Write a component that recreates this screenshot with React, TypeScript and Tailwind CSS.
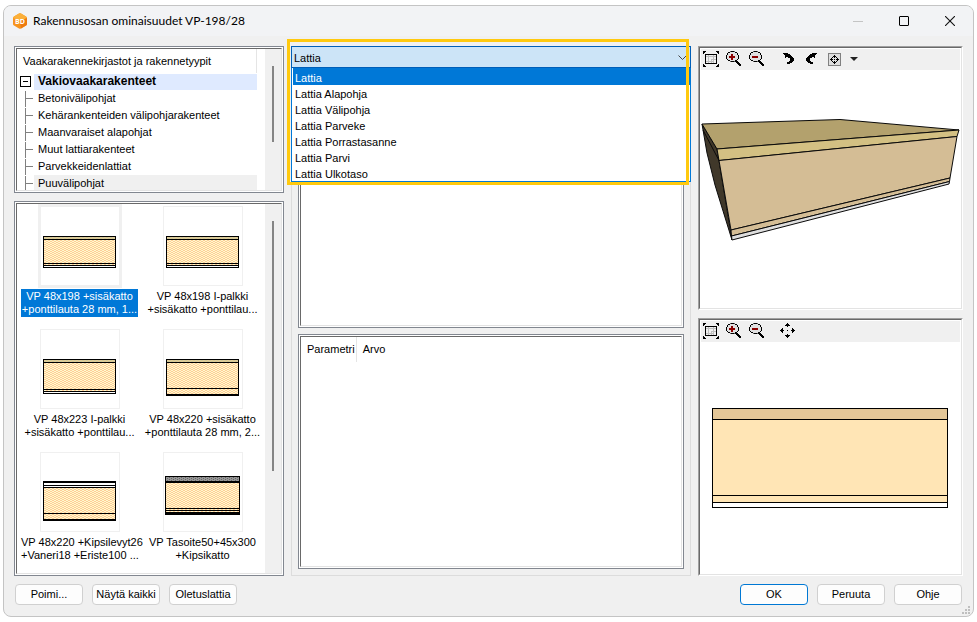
import type { ReactNode } from "react";

const treeItems = [
  "Betonivälipohjat",
  "Kehärankenteiden välipohjarakenteet",
  "Maanvaraiset alapohjat",
  "Muut lattiarakenteet",
  "Parvekkeidenlattiat",
  "Puuvälipohjat",
];

const floorTypes = [
  "Lattia",
  "Lattia Alapohja",
  "Lattia Välipohja",
  "Lattia Parveke",
  "Lattia Porrastasanne",
  "Lattia Parvi",
  "Lattia Ulkotaso",
];

type Layer = { y: number; h: number; fill: string };

type Structure = {
  label: [string, string];
  x: number;
  w: number;
  layers: Layer[];
};

const BLACK = "#000000";
const WOOD = "url(#wood)";
const BOARD = "url(#board)";
const CONCRETE = "url(#concrete)";

// layers are painted over a black block, so the gaps become the outlines
const structures: Structure[] = [
  {
    label: ["VP 48x198 +sisäkatto", "+ponttilauta 28 mm, 1..."],
    x: 3,
    w: 73,
    layers: [
      { y: 30, h: 32, fill: BLACK },
      { y: 31, h: 2, fill: BOARD },
      { y: 34, h: 23, fill: WOOD },
      { y: 58, h: 1, fill: WOOD },
      { y: 60, h: 1, fill: "#fff" },
    ],
  },
  {
    label: ["VP 48x198 I-palkki", "+sisäkatto +ponttilau..."],
    x: 3,
    w: 73,
    layers: [
      { y: 30, h: 32, fill: BLACK },
      { y: 31, h: 2, fill: BOARD },
      { y: 34, h: 23, fill: WOOD },
      { y: 58, h: 1, fill: WOOD },
      { y: 60, h: 1, fill: "#fff" },
    ],
  },
  {
    label: ["VP 48x223 I-palkki", "+sisäkatto +ponttilau..."],
    x: 3,
    w: 73,
    layers: [
      { y: 30, h: 35, fill: BLACK },
      { y: 31, h: 2, fill: BOARD },
      { y: 34, h: 26, fill: WOOD },
      { y: 61, h: 1, fill: WOOD },
      { y: 63, h: 1, fill: "#fff" },
    ],
  },
  {
    label: ["VP 48x220 +sisäkatto", "+ponttilauta 28 mm, 2..."],
    x: 3,
    w: 73,
    layers: [
      { y: 30, h: 37, fill: BLACK },
      { y: 31, h: 2, fill: BOARD },
      { y: 34, h: 25, fill: WOOD },
      { y: 60, h: 5, fill: WOOD },
    ],
  },
  {
    label: ["VP 48x220 +Kipsilevyt26", "+Vaneri18 +Eriste100 ..."],
    x: 3,
    w: 73,
    layers: [
      { y: 29, h: 40, fill: BLACK },
      { y: 31, h: 2, fill: "#fff" },
      { y: 34, h: 1, fill: "#fff" },
      { y: 36, h: 25, fill: WOOD },
      { y: 62, h: 5, fill: WOOD },
    ],
  },
  {
    label: ["VP Tasoite50+45x300", "+Kipsikatto"],
    x: 2,
    w: 75,
    layers: [
      { y: 24, h: 39, fill: BLACK },
      { y: 25, h: 4, fill: CONCRETE },
      { y: 31, h: 25, fill: WOOD },
      { y: 57, h: 1, fill: WOOD },
      { y: 59, h: 1, fill: WOOD },
    ],
  },
];

function Patterns() {
  return (
    <svg className="absolute h-0 w-0" aria-hidden="true">
      <defs>
        <pattern id="wood" width="4" height="2" patternUnits="userSpaceOnUse">
          <rect width="4" height="2" fill="#fffacc" />
          <path d="M0 0h2v1h-2zM2 1h2v1h-2z" fill="#ffcc99" />
        </pattern>
        <pattern id="board" width="4" height="2" patternUnits="userSpaceOnUse">
          <rect width="4" height="2" fill="#e6c896" />
          <path d="M0 0h2v1h-2zM2 1h2v1h-2z" fill="#cccc99" />
        </pattern>
        <pattern id="concrete" width="4" height="2" patternUnits="userSpaceOnUse">
          <rect width="4" height="2" fill="#969696" />
          <path d="M0 0h1v1h-1zM2 1h1v1h-1z" fill="#666666" />
        </pattern>
      </defs>
    </svg>
  );
}

// Old style pixel icons: one character is one pixel
const palette: Record<string, string> = {
  K: "#000000",
  R: "#8b0000",
  G: "#c0c0c0",
  L: "#e0e0e0",
  D: "#606060",
};

function PixelIcon({ rows }: { rows: string[] }) {
  return (
    <svg
      width={rows[0].length}
      height={rows.length}
      shapeRendering="crispEdges"
      aria-hidden="true"
    >
      {rows.flatMap((row, y) =>
        row.split("").map((c, x) =>
          palette[c] ? (
            <rect key={`${x}-${y}`} x={x} y={y} width="1" height="1" fill={palette[c]} />
          ) : null
        )
      )}
    </svg>
  );
}

const fitRows = [
  "KKK..........KKK",
  "KK............KK",
  "K..............K",
  "..KKKKKKKKKKKK..",
  "..K..G....G..K..",
  "..KGGGGGGGGGGK..",
  "..K..G....G..K..",
  "..K..G....G..K..",
  "..K..G..GGGGGK..",
  "..K..G..G.G..K..",
  "..KGGGGGGGG..K..",
  "..K..G..G.G..K..",
  "..KKKKKKKKKKKK..",
  "K..............K",
  "KK............KK",
  "KKK..........KKK",
];

const lensTop = ["....DKKKD.......", "..KKLLLLLKK.....", ".KLLLLLLLLLK...."];
const lensBottom = [
  "..KKLLLLLKK.....",
  "....DKKKDKKK....",
  "..........KKK...",
  "...........KKK..",
  "............KKK.",
  ".............KK.",
  "................",
];

const zoomInRows = [
  ...lensTop,
  ".KLLLRRLLLLK....",
  "KLLLLRRLLLLLK...",
  "KLLRRRRRRLLLK...",
  "KLLRRRRRRLLLK...",
  "KLLLLRRLLLLLK...",
  ".KLLLRRLLLLK....",
  ...lensBottom,
];

const zoomOutRows = [
  ...lensTop,
  ".KLLLLLLLLLK....",
  "KLLLLLLLLLLLK...",
  "KLLRRRRRRLLLK...",
  "KLLRRRRRRLLLK...",
  "KLLLLLLLLLLLK...",
  ".KLLLLLLLLLK....",
  ...lensBottom,
];

const rotateLeftRows = [
  "KKKKK.......",
  ".KKKKKK.....",
  "..KKKKKK....",
  "..KKKKKKK...",
  "..K..KKKKK..",
  ".......KKKK.",
  ".......KKKK.",
  ".......KKKK.",
  "......KKKK..",
  "....KKKKK...",
  "....KKK.....",
  "............",
];

const rotateRightRows = rotateLeftRows.map((r) => r.split("").reverse().join(""));

const moveRows = [
  ".......K........",
  "......KKK.......",
  ".....KKKKK......",
  ".......K........",
  "................",
  "..K.........K...",
  ".KK.........KK..",
  "KKKK...K...KKKK.",
  ".KK.........KK..",
  "..K.........K...",
  "................",
  ".......K........",
  ".....KKKKK......",
  "......KKK.......",
  ".......K........",
  "................",
];

const targetRows = [
  "....K....",
  "...KKK...",
  "..K.K.K..",
  ".K.....K.",
  "KKK.K.KKK",
  ".K.....K.",
  "..K.K.K..",
  "...KKK...",
  "....K....",
];

function ToolButton({ label, children }: { label: string; children: ReactNode }) {
  return (
    <button type="button" aria-label={label} className="flex h-5 w-5 items-center justify-center">
      {children}
    </button>
  );
}

function ZoomTools() {
  return (
    <div className="flex gap-[3px]">
      <ToolButton label="Sovita">
        <PixelIcon rows={fitRows} />
      </ToolButton>
      <ToolButton label="Lähennä">
        <PixelIcon rows={zoomInRows} />
      </ToolButton>
      <ToolButton label="Loitonna">
        <PixelIcon rows={zoomOutRows} />
      </ToolButton>
    </div>
  );
}

// double sunken frame used by the lists
function Frame({ className = "", children }: { className?: string; children?: ReactNode }) {
  return (
    <div className={`flex border border-[#828790] bg-white p-px ${className}`}>
      <div className="flex min-w-0 flex-1 overflow-hidden border border-t-[#696969] border-r-[#e3e3e3] border-b-[#e3e3e3] border-l-[#696969]">
        {children}
      </div>
    </div>
  );
}

function Viewer({ className = "", children }: { className?: string; children: ReactNode }) {
  return (
    <div
      className={`flex border border-t-[#a0a0a0] border-r-white border-b-white border-l-[#a0a0a0] ${className}`}
    >
      <div className="flex flex-1 flex-col border border-t-[#696969] border-r-[#e3e3e3] border-b-[#e3e3e3] border-l-[#696969] bg-white p-px">
        {children}
      </div>
    </div>
  );
}

function DialogButton({ primary = false, children }: { primary?: boolean; children: ReactNode }) {
  return (
    <button
      type="button"
      className={`h-[21px] w-[68px] rounded border bg-[#fdfdfd] text-center whitespace-nowrap ${
        primary ? "border-[#0078d4]" : "border-[#d0d0d0]"
      }`}
    >
      {children}
    </button>
  );
}

function TitleBar() {
  return (
    <header className="flex h-[30px] items-center bg-[#f2f3f5] pl-2 font-[Lato,sans-serif] text-xs">
      <svg width="16" height="16" viewBox="0 0 16 16" aria-hidden="true">
        <path
          d="M7 .6Q8 0 9 .6L14 3.4Q15 4 15 5V11Q15 12 14 12.6L9 15.4Q8 16 7 15.4L2 12.6Q1 12 1 11V5Q1 4 2 3.4Z"
          fill="#f7941d"
        />
        <path d="M8 .3Q8.500 .3 9 .6L14 3.4Q15 4 15 5L8 8L1 5Q1 4 2 3.400L7 .6Z" fill="#fbb03b" />
        <path d="M15 5V11Q15 12 14 12.6L9 15.4L8 8Z" fill="#ee7a10" />
        <text
          x="8"
          y="10.500"
          textAnchor="middle"
          fontSize="7"
          fontWeight="700"
          fill="#fff"
          fontFamily="Open Sans"
        >
          BD
        </text>
      </svg>
      <h1 className="ml-[5px] flex-1">Rakennusosan ominaisuudet VP-198/28</h1>
      <div className="flex">
        <button type="button" aria-label="Pienennä" className="flex h-[30px] w-[46px] items-center justify-center">
          <span className="h-px w-[10px] bg-[#c4c4c4]" />
        </button>
        <button type="button" aria-label="Suurenna" className="flex h-[30px] w-[46px] items-center justify-center">
          <span className="h-[10px] w-[10px] rounded-[1px] border border-black" />
        </button>
        <button type="button" aria-label="Sulje" className="flex h-[30px] w-[46px] items-center justify-center">
          <svg width="10" height="10" viewBox="0 0 10 10" stroke="#111" strokeWidth="1.1" aria-hidden="true">
            <path d="M0 0L10 10M10 0L0 10" />
          </svg>
        </button>
      </div>
    </header>
  );
}

function StructureTree() {
  return (
    <Frame className="h-[147px]">
      <div className="min-w-0 flex-1 pr-2">
        <div className="flex h-6 items-center border-r border-[#e5e5e5] pt-px pl-[6px] whitespace-nowrap">
          Vaakarakennekirjastot ja rakennetyypit
        </div>
        <div className="flex h-[17px] items-center pl-[3px]">
          <button
            type="button"
            aria-label="Sulje haara"
            className="mr-[3px] flex h-[11px] w-[11px] items-center justify-center border border-black"
          >
            <span className="h-px w-[5px] bg-black" />
          </button>
          <span className="h-4 flex-1 bg-[#dfeaff] pl-1 text-xs leading-[14px] font-bold">
            Vakiovaakarakenteet
          </span>
        </div>
        <ul>
          {treeItems.map((item) => (
            <li key={item} className="flex h-[17px] items-center pl-2">
              <span className="h-4 w-px bg-[#808080]" />
              <span className="h-px w-[7px] bg-[#808080]" />
              <span
                className={`ml-px h-[17px] flex-1 pl-1 leading-[17px] whitespace-nowrap ${
                  item === "Puuvälipohjat" ? "bg-[#f0f0f0]" : ""
                }`}
              >
                {item}
              </span>
            </li>
          ))}
        </ul>
      </div>
      <div className="flex w-4 justify-center bg-[#f0f0f0] pt-[17px]">
        <span className="h-[76px] w-[2px] bg-[#858585]" />
      </div>
    </Frame>
  );
}

function StructureList() {
  return (
    <Frame className="flex-1">
      <ul className="grid flex-1 grid-cols-2 grid-rows-[123px_123px_115px] px-px pt-[2px]">
        {structures.map((s, i) => (
          <li key={i} className="flex flex-col items-center">
            <div
              className={`h-20 w-20 border border-[#f0f0f0] ${
                i === 0 ? "ring-2 ring-[#f0f0f0]" : ""
              }`}
            >
              <svg className="-m-px" width="80" height="80" shapeRendering="crispEdges" aria-hidden="true">
                {s.layers.map((l) => (
                  <rect
                    key={l.y}
                    x={l.fill === BLACK ? s.x : s.x + 1}
                    y={l.y}
                    width={l.fill === BLACK ? s.w : s.w - 2}
                    height={l.h}
                    fill={l.fill}
                  />
                ))}
              </svg>
            </div>
            <span
              className={`mt-[3px] h-7 w-[117px] pt-px text-center leading-[13px] whitespace-nowrap ${
                i === 0 ? "bg-[#0078d7] text-white" : ""
              }`}
            >
              {s.label[0]}
              <br />
              {s.label[1]}
            </span>
          </li>
        ))}
      </ul>
      <div className="flex w-4 justify-center bg-[#f0f0f0] pt-[17px]">
        <span className="h-[250px] w-[2px] bg-[#858585]" />
      </div>
    </Frame>
  );
}

function FloorTypeSelect() {
  return (
    <div className="relative z-10 h-[22px]">
      <select
        aria-label="Lattiatyyppi"
        defaultValue="Lattia"
        className="h-full w-full appearance-none border border-[#005fb8] bg-[#cce4f7] pt-[2px] pl-[2px]"
      >
        {floorTypes.map((t) => (
          <option key={t}>{t}</option>
        ))}
      </select>
      <svg
        className="pointer-events-none absolute top-[9px] right-1"
        width="9"
        height="6"
        fill="none"
        stroke="#444"
        aria-hidden="true"
      >
        <path d="M.5 .5L4.500 4.500L8.500 .5" />
      </svg>
      <ul
        role="listbox"
        aria-label="Lattiatyypit"
        className="absolute inset-x-0 top-[22px] border border-t-0 border-[#0078d7] bg-white"
      >
        {floorTypes.map((t, i) => (
          <li
            key={t}
            role="option"
            aria-selected={i === 0}
            className={`ml-px pl-[2px] leading-[18px] ${
              i === 0 ? "h-[17px] bg-[#0078d7] pt-px text-white" : "h-4"
            }`}
          >
            {t}
          </li>
        ))}
      </ul>
      <div className="pointer-events-none absolute -top-[7px] right-[2px] -left-1 h-[146px] border-3 border-[#ffc90e]" />
    </div>
  );
}

function View3D() {
  return (
    <svg width="259" height="238" stroke="#0a0a0a" strokeLinejoin="round" aria-hidden="true">
      <path d="M1 54L16 79L18 90.500L31 170L14 115L6 83Z" fill="#40382a" />
      <path d="M1 54L139 49.500L258 60L16 79Z" fill="#b3a16d" />
      <path d="M16 79L258 60L256 66.500L18 90.500Z" fill="#d3c083" />
      <path d="M18 90.500L256 66.500L249 108L30 160Z" fill="#d4bd95" />
      <path d="M30 160L249 108L248.500 111.500L30.500 166Z" fill="#d4bd95" />
      <path d="M30.500 166L248.500 111.500L248 114L31 170Z" fill="#dedede" />
      <path d="M2 60L18 90.500" fill="none" />
    </svg>
  );
}

function SectionView() {
  return (
    <svg width="259" height="230" shapeRendering="crispEdges" aria-hidden="true">
      <rect x="11" y="66" width="236" height="100" fill="#000" />
      <rect x="12" y="67" width="234" height="10" fill="#e4c798" />
      <rect x="12" y="78" width="234" height="75" fill="#ffe5b5" />
      <rect x="12" y="154" width="234" height="6" fill="#ffe5b5" />
      <rect x="12" y="161" width="234" height="4" fill="#fff" />
    </svg>
  );
}

function ResizeGrip() {
  return (
    <svg
      className="absolute right-[3px] bottom-[2px]"
      width="8"
      height="8"
      fill="#bfbfbf"
      shapeRendering="crispEdges"
      aria-hidden="true"
    >
      <path d="M6 0h2v2h-2zM3 3h2v2h-2zM6 3h2v2h-2zM0 6h2v2h-2zM3 6h2v2h-2zM6 6h2v2h-2z" />
    </svg>
  );
}

export default function App() {
  return (
    <div className="flex min-h-screen bg-white px-[3px] py-[5px] font-['Liberation_Sans',Arial,sans-serif] text-[11px] text-black">
      <Patterns />
      <div className="relative flex flex-1 flex-col overflow-hidden rounded-lg border border-[#c4c4c4] bg-[#f0f0f0]">
        <TitleBar />
        <main className="flex flex-1 gap-[7px] px-[10px] pt-[10px]">
          <div className="flex w-[270px] flex-col gap-2">
            <StructureTree />
            <StructureList />
          </div>

          <div className="flex flex-1 flex-col border-x border-b border-[#dcdcdc]">
            <div className="-mx-px">
              <FloorTypeSelect />
            </div>
            <div className="flex flex-1 flex-col gap-[6px] p-[6px]">
              <Frame className="h-[254px]" />
              <Frame className="flex-1">
                <table className="h-[25px] self-start">
                  <thead>
                    <tr>
                      <th className="border-r border-[#e5e5e5] pr-px pl-[6px] text-left font-normal">
                        Parametri
                      </th>
                      <th className="pl-[6px] text-left font-normal">Arvo</th>
                    </tr>
                  </thead>
                </table>
              </Frame>
            </div>
          </div>

          <div className="flex w-[265px] flex-col gap-2">
            <Viewer className="h-[264px]">
              <div className="flex h-[21px] items-start bg-[#f0f0f0]">
                <ZoomTools />
                <div className="ml-3 flex gap-[2px]">
                  <ToolButton label="Kierrä vasemmalle">
                    <PixelIcon rows={rotateLeftRows} />
                  </ToolButton>
                  <ToolButton label="Kierrä oikealle">
                    <PixelIcon rows={rotateRightRows} />
                  </ToolButton>
                </div>
                <button
                  type="button"
                  aria-label="Kohdista"
                  className="mt-1 ml-[7px] flex h-[13px] w-[13px] items-center justify-center border border-[#808080] bg-[#dedede]"
                >
                  <PixelIcon rows={targetRows} />
                </button>
                <button type="button" aria-label="Lisää" className="ml-[7px] flex h-5 w-3 items-center justify-center">
                  <svg width="8" height="4" aria-hidden="true">
                    <path d="M0 0H8L4 4Z" fill="#222" />
                  </svg>
                </button>
              </div>
              <View3D />
            </Viewer>
            <Viewer className="flex-1">
              <div className="flex h-[21px] items-start bg-[#f0f0f0]">
                <ZoomTools />
                <div className="ml-[11px]">
                  <ToolButton label="Siirrä">
                    <PixelIcon rows={moveRows} />
                  </ToolButton>
                </div>
              </div>
              <SectionView />
            </Viewer>
          </div>
        </main>

        <footer className="flex justify-between px-[11px] pt-2 pb-[11px]">
          <div className="flex gap-[9px]">
            <DialogButton>Poimi...</DialogButton>
            <DialogButton>Näytä kaikki</DialogButton>
            <DialogButton>Oletuslattia</DialogButton>
          </div>
          <div className="flex gap-[9px]">
            <DialogButton primary>OK</DialogButton>
            <DialogButton>Peruuta</DialogButton>
            <DialogButton>Ohje</DialogButton>
          </div>
        </footer>
        <ResizeGrip />
      </div>
    </div>
  );
}
